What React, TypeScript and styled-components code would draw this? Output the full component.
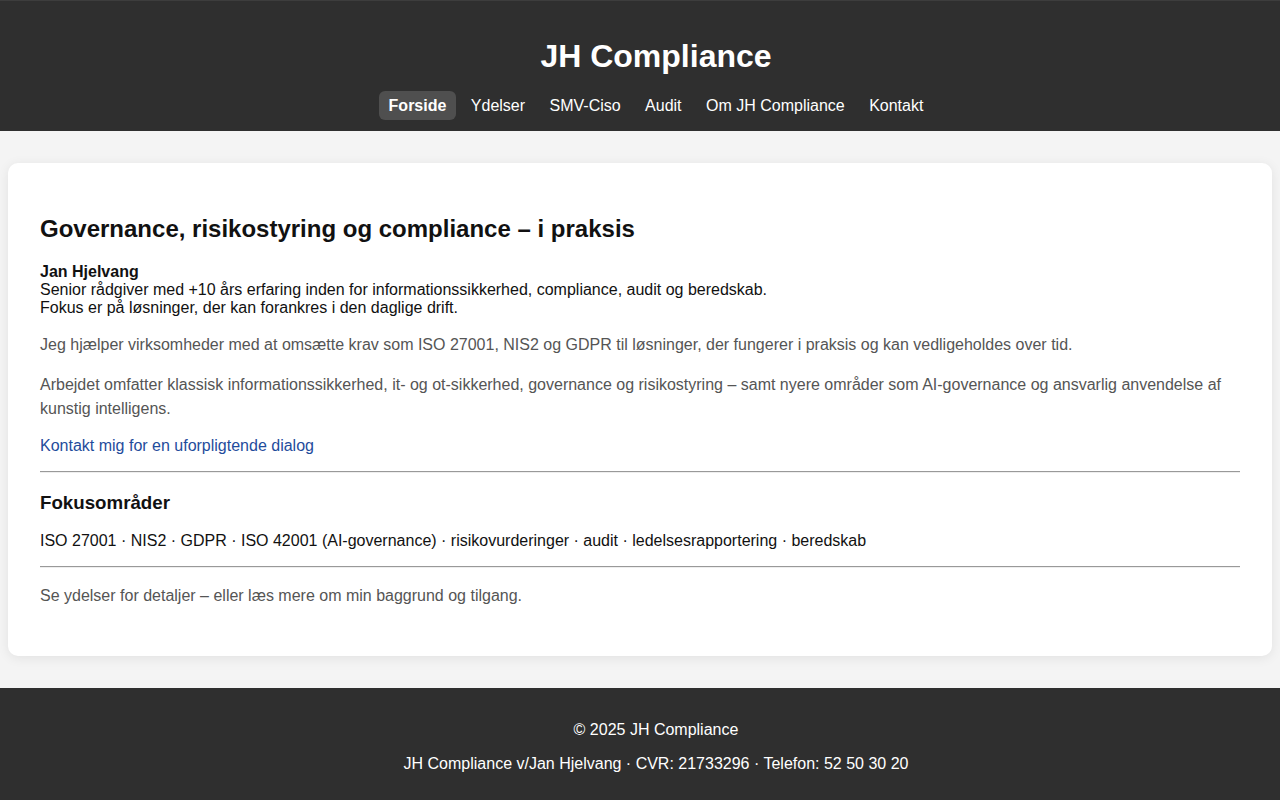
import React from "react";
import styled, { createGlobalStyle } from "styled-components";

const Global = createGlobalStyle`
  html, body { margin: 0; padding: 0; }
  body {
    font-family: "Liberation Sans", Arial, sans-serif;
    font-size: 16px;
    background: #f4f4f4;
    color: #111;
  }
`;

const Header = styled.header`
  background: #2f2f2f;
  border-top: 1px solid #3d3d3d;
  color: #fff;
  text-align: center;
  padding: 16px 0 16px 32px;
`;

const Title = styled.h1`
  font-size: 32px;
  font-weight: bold;
  margin: 21px 0 22px;
  line-height: normal;
`;

const Nav = styled.nav`
  display: flex;
  justify-content: center;
  gap: 4.45px;
  line-height: 18px;
`;

const NavLink = styled.a<{ $active?: boolean }>`
  color: #fff;
  text-decoration: none;
  padding: 6px 10px 5px;
  margin: -6px 0 -5px;
  border-radius: 6px;
  font-weight: ${(p) => (p.$active ? "bold" : "normal")};
  background: ${(p) => (p.$active ? "#4f4f4f" : "transparent")};
`;

const Main = styled.main`
  padding: 32px 8px;
`;

const Card = styled.section`
  background: #fff;
  border-radius: 10px;
  box-shadow: 0 2px 12px rgba(0, 0, 0, 0.08);
  padding: 32px;
`;

const Heading = styled.h2`
  font-size: 24px;
  font-weight: bold;
  margin: 20px 0;
  line-height: 28px;
`;

const SubHeading = styled.h3`
  font-size: 18.72px;
  font-weight: bold;
  margin: 18.72px 0;
  line-height: 21.5px;
`;

const Text = styled.p<{ $muted?: boolean; $loose?: boolean }>`
  margin: 16px 0;
  line-height: ${(p) => (p.$loose ? "24px" : "18px")};
  color: ${(p) => (p.$muted ? "#555" : "#111")};
`;

const Link = styled.a`
  color: #1f4c9c;
  text-decoration: none;
`;

const Rule = styled.hr`
  border: 0;
  border-top: 1px solid #999;
  border-bottom: 1px solid #eee;
  margin: 16px 0;
`;

const Footer = styled.footer`
  background: #2f2f2f;
  color: #fff;
  text-align: center;
  padding: 17px 0 16px 32px;
`;

const FooterLine = styled.p`
  margin: 16px 0;
  line-height: 18px;
`;

const navItems = ["Forside", "Ydelser", "SMV-Ciso", "Audit", "Om JH Compliance", "Kontakt"];

export default function App() {
  return (
    <>
      <Global />
      <Header>
        <Title>JH Compliance</Title>
        <Nav>
          {navItems.map((n, i) => (
            <NavLink key={n} href="#" $active={i === 0}>
              {n}
            </NavLink>
          ))}
        </Nav>
      </Header>
      <Main>
        <Card>
          <Heading>Governance, risikostyring og compliance – i praksis</Heading>
          <Text>
            <strong>Jan Hjelvang</strong>
            <br />
            Senior rådgiver med +10 års erfaring inden for informationssikkerhed, compliance, audit og beredskab.
            <br />
            Fokus er på løsninger, der kan forankres i den daglige drift.
          </Text>
          <Text $muted $loose>
            Jeg hjælper virksomheder med at omsætte krav som ISO 27001, NIS2 og GDPR til løsninger, der fungerer i praksis og kan vedligeholdes over tid.
          </Text>
          <Text $muted $loose>
            Arbejdet omfatter klassisk informationssikkerhed, it- og ot-sikkerhed, governance og risikostyring – samt nyere områder som AI-governance og ansvarlig anvendelse af kunstig intelligens.
          </Text>
          <Text>
            <Link href="#">Kontakt mig for en uforpligtende dialog</Link>
          </Text>
          <Rule />
          <SubHeading>Fokusområder</SubHeading>
          <Text>
            ISO 27001 · NIS2 · GDPR · ISO 42001 (AI-governance) · risikovurderinger · audit · ledelsesrapportering · beredskab
          </Text>
          <Rule />
          <Text $muted $loose>
            Se ydelser for detaljer – eller læs mere om min baggrund og tilgang.
          </Text>
        </Card>
      </Main>
      <Footer>
        <FooterLine>© 2025 JH Compliance</FooterLine>
        <FooterLine>JH Compliance v/Jan Hjelvang · CVR: 21733296 · Telefon: 52 50 30 20</FooterLine>
      </Footer>
    </>
  );
}
